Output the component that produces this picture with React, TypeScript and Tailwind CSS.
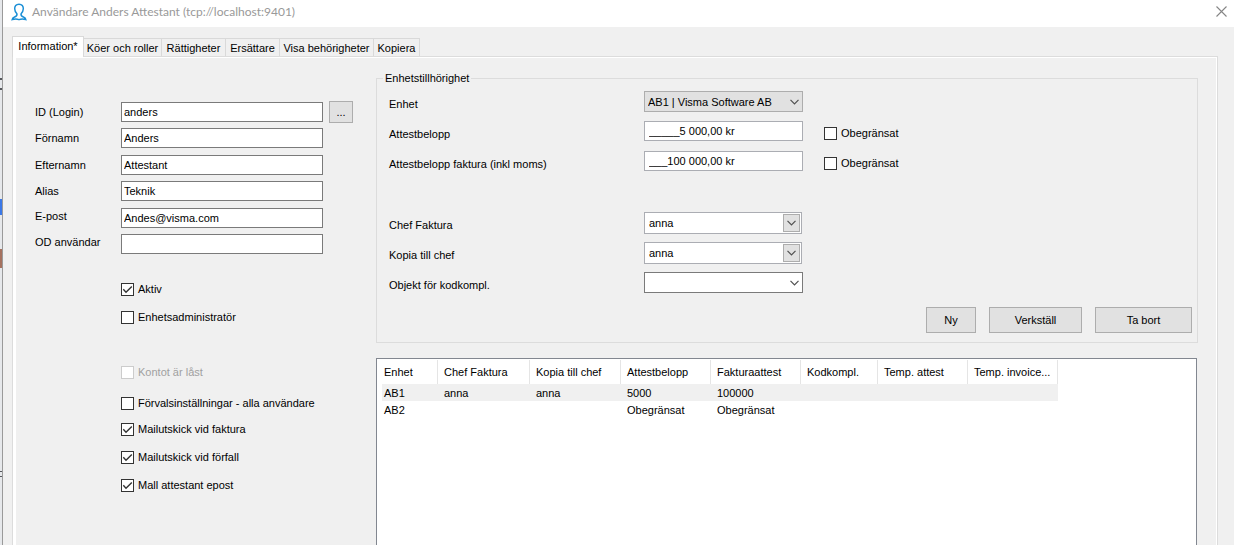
import { ReactNode } from "react";

type Field = {
  id: string;
  label: string;
  value: string;
  top?: boolean;
};

const fields: Field[] = [
  { id: "login", label: "ID (Login)", value: "anders" },
  { id: "fornamn", label: "Förnamn", value: "Anders" },
  { id: "efternamn", label: "Efternamn", value: "Attestant" },
  { id: "alias", label: "Alias", value: "Teknik" },
  { id: "epost", label: "E-post", value: "Andes@visma.com", top: true },
  { id: "od", label: "OD användar", value: "", top: true },
];

const tabs = [
  { name: "Köer och roller", width: "w-[78px]" },
  { name: "Rättigheter", width: "w-16" },
  { name: "Ersättare", width: "w-[54px]" },
  { name: "Visa behörigheter", width: "w-[94px]" },
  { name: "Kopiera", width: "w-[46px]" },
];

const columns = [
  { name: "Enhet", width: "w-[56px]" },
  { name: "Chef Faktura", width: "w-[92px]" },
  { name: "Kopia till chef", width: "w-[91px]" },
  { name: "Attestbelopp", width: "w-[90px]" },
  { name: "Fakturaattest", width: "w-[90px]" },
  { name: "Kodkompl.", width: "w-[77px]" },
  { name: "Temp. attest", width: "w-[90px]" },
  { name: "Temp. invoice...", width: "w-[90px]" },
];

const rows = [
  ["AB1", "anna", "anna", "5000", "100000", "", "", ""],
  ["AB2", "", "", "Obegränsat", "Obegränsat", "", "", ""],
];

function Chevron() {
  return (
    <svg width="9" height="6" viewBox="0 0 9 6" fill="none" stroke="#505050" strokeWidth="1.2">
      <path d="M0.5 0.8 L4.5 4.8 L8.5 0.8" />
    </svg>
  );
}

function Check({
  label,
  checked,
  disabled,
  className = "",
}: {
  label: string;
  checked?: boolean;
  disabled?: boolean;
  className?: string;
}) {
  return (
    <label
      className={`flex h-5 items-center gap-1 ${disabled ? "text-[#a0a0a0]" : ""} ${className}`}
    >
      <span className="relative flex size-[13px] shrink-0">
        <input
          type="checkbox"
          defaultChecked={checked}
          disabled={disabled}
          className="peer size-[13px] appearance-none border border-[#333333] bg-white disabled:border-[#cccccc]"
        />
        <svg
          viewBox="0 0 13 13"
          fill="none"
          stroke="#333333"
          strokeWidth="1.4"
          className="pointer-events-none absolute inset-0 hidden peer-checked:block"
        >
          <path d="M2.3 6.3 L5 9.2 L10.8 3.4" />
        </svg>
      </span>
      {label}
    </label>
  );
}

function Row({ id, label, children }: { id: string; label: string; children: ReactNode }) {
  return (
    <div className="flex h-[30px] items-start">
      <label htmlFor={id} className="w-[255px] shrink-0 leading-[26px]">
        {label}
      </label>
      {children}
    </div>
  );
}

function Combo({ id, value }: { id: string; value: string }) {
  return (
    <div className="relative h-[22px] w-[158px]">
      <select
        id={id}
        defaultValue={value}
        className="size-full appearance-none border border-[#abadb3] bg-white pl-1 leading-4"
      >
        <option>{value}</option>
      </select>
      <span className="pointer-events-none absolute inset-y-0.5 right-0.5 flex w-[17px] items-center justify-center border border-[#adadad] bg-[#e1e1e1]">
        <Chevron />
      </span>
    </div>
  );
}

export default function App() {
  return (
    <div className="flex min-h-screen bg-[#f0f0f0] font-['Liberation_Sans',Arial,sans-serif] text-[11px] leading-4 text-black">
      {/* edge of the window behind */}
      <div className="flex w-[3px] shrink-0 flex-col border-r border-[#9a9a9a] bg-[#e6e8eb]">
        <div className="mt-[78px] h-3 border-y-2 border-[#55585c]" />
        <div className="mt-[109px] h-4 bg-[#3b78e7]" />
        <div className="mt-[34px] h-[19px] bg-[#a5715f]" />
        <div className="mt-[203px] h-[6px] border-y border-[#55585c]" />
      </div>

      <div className="flex min-w-0 flex-1 flex-col">
        <header className="flex h-[27px] items-center bg-white pr-[7px] pb-1 pl-2">
          <svg width="16" height="18" viewBox="0 0 16 18" fill="none" stroke="#1b8fd6" strokeWidth="1.5">
            <path d="M8 1.2 C5 1.2 3.6 3.2 3.7 5.7 C3.8 8 4.7 9.6 5.9 10.8 C6.4 12.6 5.6 13.3 3.6 14 C2.2 14.5 1.4 15.2 1.2 16.6 C4.5 15.6 6.2 16 8 16.6 C9.8 16 11.5 15.6 14.8 16.6 C14.6 15.2 13.8 14.5 12.4 14 C10.4 13.3 9.6 12.6 10.1 10.8 C11.3 9.6 12.2 8 12.3 5.7 C12.4 3.2 11 1.2 8 1.2 Z" />
          </svg>
          <h1 className="ml-[5px] flex-1 font-['Lato','Open_Sans',sans-serif] text-xs text-[#999999]">
            Användare Anders Attestant (tcp://localhost:9401)
          </h1>
          <button type="button" aria-label="Stäng">
            <svg width="11" height="11" viewBox="0 0 11 11" fill="none" stroke="#858585" strokeWidth="1.1">
              <path d="M0.5 0.5 L10.5 10.5 M10.5 0.5 L0.5 10.5" />
            </svg>
          </button>
        </header>

        <main className="flex flex-1 flex-col pt-[9px] pr-4 pl-[9px]">
          <nav className="flex h-5 items-end">
            <button
              type="button"
              className="relative z-10 -mb-px h-[21px] w-[72px] border border-b-0 border-[#d9d9d9] bg-white pb-0.5 whitespace-nowrap"
            >
              Information*
            </button>
            {tabs.map((tab) => (
              <button
                key={tab.name}
                type="button"
                className={`h-[18px] border-t border-r border-[#d9d9d9] whitespace-nowrap ${tab.width}`}
              >
                {tab.name}
              </button>
            ))}
          </nav>

          <div className="flex flex-1 border border-b-0 border-[#dcdcdc]">
            <div className="flex flex-1 border-t border-r border-l-[3px] border-white">
              <form className="w-[360px] shrink-0 pt-11 pl-[19px]">
                <div className="flex h-[152px] flex-col justify-between">
                  {fields.map((field) => (
                    <div
                      key={field.id}
                      className={`flex h-5 ${field.top ? "items-start" : "items-center"}`}
                    >
                      <label htmlFor={field.id} className="w-[86px]">
                        {field.label}
                      </label>
                      <input
                        id={field.id}
                        type="text"
                        defaultValue={field.value}
                        className="h-5 w-[202px] border border-[#7a7a7a] bg-white px-0.5"
                      />
                      {field.id == "login" && (
                        <button
                          type="button"
                          className="ml-1.5 h-[22px] w-6 border border-[#adadad] bg-[#e1e1e1]"
                        >
                          ...
                        </button>
                      )}
                    </div>
                  ))}
                </div>

                <div className="mt-[25px] flex flex-col pl-[86px]">
                  <Check label="Aktiv" checked />
                  <Check label="Enhetsadministratör" className="mt-2" />
                  <Check label="Kontot är låst" disabled className="mt-[35px]" />
                  <Check label="Förvalsinställningar - alla användare" className="mt-[11px]" />
                  <Check label="Mailutskick vid faktura" checked className="mt-1.5" />
                  <Check label="Mailutskick vid förfall" checked className="mt-2" />
                  <Check label="Mall attestant epost" checked className="mt-2" />
                </div>
              </form>

              <div className="flex min-w-0 flex-1 flex-col pt-3 pr-[18px]">
                <fieldset className="border border-[#dcdcdc] pb-[9px]">
                  <legend className="ml-1.5 px-0.5">Enhetstillhörighet</legend>
                  <div className="pt-[5px] pl-3">
                    <Row id="enhet" label="Enhet">
                      <div className="relative h-[21px] w-[159px]">
                        <select
                          id="enhet"
                          className="size-full appearance-none border border-[#adadad] bg-[#e1e1e1] pl-[3px] leading-4"
                        >
                          <option>AB1 | Visma Software AB</option>
                        </select>
                        <span className="pointer-events-none absolute inset-y-0 right-1 flex items-center">
                          <Chevron />
                        </span>
                      </div>
                    </Row>
                    <Row id="belopp" label="Attestbelopp">
                      <input
                        id="belopp"
                        type="text"
                        defaultValue="_____5 000,00 kr"
                        className="h-5 w-[159px] border border-[#abadb3] bg-white px-1"
                      />
                      <Check label="Obegränsat" className="mt-0.5 ml-[21px]" />
                    </Row>
                    <Row id="beloppfaktura" label="Attestbelopp faktura (inkl moms)">
                      <input
                        id="beloppfaktura"
                        type="text"
                        defaultValue="___100 000,00 kr"
                        className="h-5 w-[159px] border border-[#abadb3] bg-white px-1"
                      />
                      <Check label="Obegränsat" className="mt-0.5 ml-[21px]" />
                    </Row>
                    <div className="mt-[31px]">
                      <Row id="chef" label="Chef Faktura">
                        <Combo id="chef" value="anna" />
                      </Row>
                      <Row id="kopia" label="Kopia till chef">
                        <Combo id="kopia" value="anna" />
                      </Row>
                      <Row id="objekt" label="Objekt för kodkompl.">
                        <div className="relative h-[21px] w-[159px]">
                          <select
                            id="objekt"
                            className="size-full appearance-none border border-[#7a7a7a] bg-white pl-[3px] leading-4"
                          >
                            <option></option>
                          </select>
                          <span className="pointer-events-none absolute inset-y-0 right-1 flex items-center">
                            <Chevron />
                          </span>
                        </div>
                      </Row>
                    </div>
                  </div>
                  <div className="mt-[5px] flex justify-end gap-[13px] pr-[5px]">
                    <button type="button" className="h-[26px] w-[50px] border border-[#adadad] bg-[#e1e1e1]">
                      Ny
                    </button>
                    <button type="button" className="h-[26px] w-[93px] border border-[#adadad] bg-[#e1e1e1]">
                      Verkställ
                    </button>
                    <button type="button" className="h-[26px] w-[97px] border border-[#adadad] bg-[#e1e1e1]">
                      Ta bort
                    </button>
                  </div>
                </fieldset>

                <div className="mt-[15px] mr-px flex-1 border border-b-0 border-[#828790] bg-white pt-px pl-[5px]">
                  <table className="w-[676px] table-fixed border-separate border-spacing-0 text-left">
                    <thead>
                      <tr>
                        {columns.map((col) => (
                          <th
                            key={col.name}
                            className={`h-6 border-r border-[#e5e5e5] p-0 pl-1.5 font-normal whitespace-nowrap first:pl-0.5 ${col.width}`}
                          >
                            {col.name}
                          </th>
                        ))}
                      </tr>
                    </thead>
                    <tbody>
                      {rows.map((row) => (
                        <tr key={row[0]} className="first:bg-[#f0f0f0]">
                          {row.map((cell, i) => (
                            <td key={i} className="h-[17px] p-0 pl-1.5 first:pl-0.5">
                              {cell}
                            </td>
                          ))}
                        </tr>
                      ))}
                    </tbody>
                  </table>
                </div>
              </div>
            </div>
          </div>
        </main>
      </div>
    </div>
  );
}
